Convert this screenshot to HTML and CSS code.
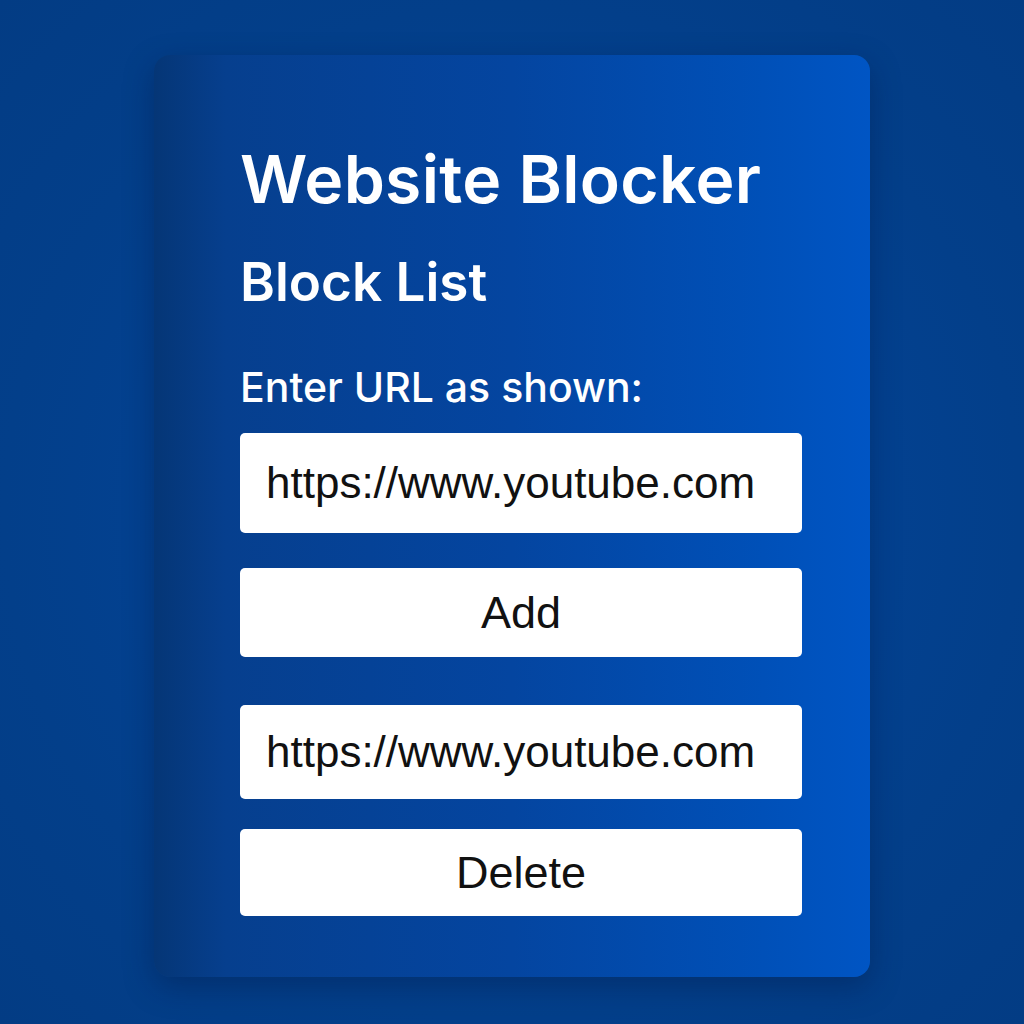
FILE: index.html
```html
<!DOCTYPE html>
<html>
<head>
<meta charset="utf-8">
<link rel="stylesheet" href="styles.css">
</head>
<body>
<div class="card">
  <h1 class="title">Website Blocker</h1>
  <h2 class="subtitle">Block List</h2>
  <p class="label">Enter URL as shown:</p>
  <div class="field field-input">https://www.youtube.com</div>
  <div class="btn btn-add">Add</div>
  <div class="field field-item">https://www.youtube.com</div>
  <div class="btn btn-delete">Delete</div>
</div>
</body>
</html>
```
FILE: styles.css
```css
html, body {
  margin: 0;
  padding: 0;
}
body {
  width: 1024px;
  height: 1024px;
  background: radial-gradient(ellipse at 50% 50%, #0347a0 0%, #033f8a 70%, #033c84 100%);
  font-family: Inter, "Noto Sans", sans-serif;
  padding-top: 55px;
  box-sizing: border-box;
}
.card {
  margin-left: 154px;
  width: 716px;
  height: 922px;
  box-sizing: border-box;
  border-radius: 16px;
  background: linear-gradient(90deg, #053676 0%, #063f8e 10%, #0445a0 50%, #0050b8 85%, #0055c4 100%);
  box-shadow: 0 10px 30px rgba(0, 20, 60, 0.35);
  padding: 85px 68px 0 86px;
  display: flex;
  flex-direction: column;
  color: #fff;
}
.title {
  margin: 0;
  font-size: 66px;
  font-weight: 600;
  line-height: 78px;
  letter-spacing: 0.3px;
}
.subtitle {
  margin: 0;
  margin-top: 32px;
  font-size: 53px;
  font-weight: 600;
  line-height: 64px;
}
.label {
  margin: 0;
  margin-top: 48px;
  font-size: 41px;
  font-weight: 500;
  line-height: 50px;
}
.field {
  background: #fff;
  border-radius: 5px;
  color: #111;
  font-family: "Liberation Sans", Arial, sans-serif;
  font-size: 44px;
  display: flex;
  align-items: center;
  padding-left: 26px;
  box-sizing: border-box;
}
.field-input {
  margin-top: 21px;
  height: 100px;
}
.field-item {
  margin-top: 48px;
  height: 94px;
}
.btn {
  background: #fff;
  border-radius: 5px;
  color: #111;
  font-family: "Liberation Sans", Arial, sans-serif;
  font-size: 45px;
  display: flex;
  align-items: center;
  justify-content: center;
}
.btn-add {
  margin-top: 35px;
  height: 89px;
}
.btn-delete {
  margin-top: 30px;
  height: 87px;
}
```
